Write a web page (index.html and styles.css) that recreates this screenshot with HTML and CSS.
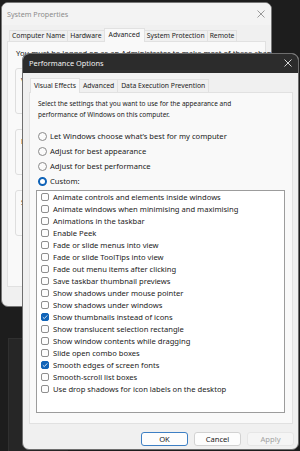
FILE: index.html
```html
<!DOCTYPE html>
<html>
<head>
<meta charset="utf-8">
<title>Performance Options</title>
<link rel="stylesheet" href="styles.css">
</head>
<body>
<div class="backwin"></div>

<div class="win sys">
  <div class="titlebar light">
    <span class="title">System Properties</span>
    <svg class="close" viewBox="0 0 8 8" width="8" height="8"><path d="M0.5 0.5 L7.5 7.5 M7.5 0.5 L0.5 7.5" stroke="#8f8f8f" stroke-width="0.9" fill="none"/></svg>
  </div>
  <div class="tabs stabs">
    <div class="tab">Computer Name</div>
    <div class="tab">Hardware</div>
    <div class="tab sel">Advanced</div>
    <div class="tab">System Protection</div>
    <div class="tab">Remote</div>
  </div>
  <div class="panel syspanel">
    <p class="note">You must be logged on as an Administrator to make most of these changes.</p>
    <fieldset class="group">
      <legend>Performance</legend>
      <p>Visual effects, processor scheduling, memory usage and virtual memory</p>
    </fieldset>
    <fieldset class="group">
      <legend>User Profiles</legend>
      <p>Desktop settings related to your sign-in</p>
    </fieldset>
    <fieldset class="group">
      <legend>Startup and Recovery</legend>
      <p>System startup, system failure and debugging information</p>
    </fieldset>
  </div>
</div>

<div class="win perf">
  <div class="titlebar dark">
    <span class="title">Performance Options</span>
    <svg class="close" viewBox="0 0 8 8" width="8" height="8"><path d="M0.5 0.5 L7.5 7.5 M7.5 0.5 L0.5 7.5" stroke="#e8e8e8" stroke-width="0.9" fill="none"/></svg>
  </div>
  <div class="body">
    <div class="tabs ptabs">
      <div class="tab sel">Visual Effects</div>
      <div class="tab">Advanced</div>
      <div class="tab">Data Execution Prevention</div>
    </div>
    <div class="panel perfpanel">
      <p class="intro">Select the settings that you want to use for the appearance and performance of Windows on this computer.</p>
      <div class="radios">
        <div class="radio"><span class="rb"></span>Let Windows choose what’s best for my computer</div>
        <div class="radio"><span class="rb"></span>Adjust for best appearance</div>
        <div class="radio"><span class="rb"></span>Adjust for best performance</div>
        <div class="radio"><span class="rb on"></span>Custom:</div>
      </div>
      <div class="listbox">
        <div class="item"><span class="cb"></span>Animate controls and elements inside windows</div>
        <div class="item"><span class="cb"></span>Animate windows when minimising and maximising</div>
        <div class="item"><span class="cb"></span>Animations in the taskbar</div>
        <div class="item"><span class="cb"></span>Enable Peek</div>
        <div class="item"><span class="cb"></span>Fade or slide menus into view</div>
        <div class="item"><span class="cb"></span>Fade or slide ToolTips into view</div>
        <div class="item"><span class="cb"></span>Fade out menu items after clicking</div>
        <div class="item"><span class="cb"></span>Save taskbar thumbnail previews</div>
        <div class="item"><span class="cb"></span>Show shadows under mouse pointer</div>
        <div class="item"><span class="cb"></span>Show shadows under windows</div>
        <div class="item"><span class="cb on"><svg viewBox="0 0 8 8" width="8" height="8"><path d="M1.8 4.2 L3.3 5.6 L6.3 2.4" stroke="#fff" stroke-width="0.8" fill="none"/></svg></span>Show thumbnails instead of icons</div>
        <div class="item"><span class="cb"></span>Show translucent selection rectangle</div>
        <div class="item"><span class="cb"></span>Show window contents while dragging</div>
        <div class="item"><span class="cb"></span>Slide open combo boxes</div>
        <div class="item"><span class="cb on"><svg viewBox="0 0 8 8" width="8" height="8"><path d="M1.8 4.2 L3.3 5.6 L6.3 2.4" stroke="#fff" stroke-width="0.8" fill="none"/></svg></span>Smooth edges of screen fonts</div>
        <div class="item"><span class="cb"></span>Smooth-scroll list boxes</div>
        <div class="item"><span class="cb"></span>Use drop shadows for icon labels on the desktop</div>
      </div>
    </div>
    <div class="buttons">
      <button class="btn def">OK</button>
      <button class="btn">Cancel</button>
      <button class="btn dis">Apply</button>
    </div>
  </div>
</div>
</body>
</html>
```

FILE: styles.css
```css
* { box-sizing: border-box; margin: 0; padding: 0; }
html, body { width: 300px; height: 451px; overflow: hidden; }
body {
  position: relative;
  background: #1d1d1d;
  font-family: "Noto Sans", "Segoe UI", sans-serif;
  font-size: 7.6px;
  line-height: 11px;
  color: #1b1b1b;
}

.backwin {
  position: absolute;
  left: 8px; top: 338px;
  width: 60px; height: 113px;
  background: #262626;
  border-left: 1px solid #303030;
  border-top: 1px solid #303030;
}

.win { position: absolute; overflow: hidden; }

.sys {
  left: 1px; top: 2px;
  width: 271px; height: 305px;
  background: #f0f0f0;
  border: 1px solid #777;
  border-radius: 7px;
}

.perf {
  left: 22px; top: 53px;
  width: 277px; height: 397px;
  background: #f0f0f0;
  border: 1px solid #6e6e6e;
  border-radius: 7px;
  display: flex;
  flex-direction: column;
}

.titlebar {
  display: flex;
  align-items: center;
  justify-content: space-between;
}
.titlebar.light { height: 22px; padding: 0 6px 0 5px; background: #f3f3f3; }
.titlebar.light .title { color: #8c8c8c; font-size: 7.2px; }
.titlebar.dark { height: 19px; padding: 0 6px 1px 6px; background: #2c2c2c; }
.titlebar.dark .title { color: #f2f2f2; font-size: 7.4px; }

.tabs {
  display: flex;
  align-items: flex-end;
  position: relative;
  z-index: 1;
}
.tab {
  border: 1px solid #e1e1e1;
  border-bottom: none;
  background: #f0f0f0;
  white-space: nowrap;
}
.tab + .tab { margin-left: -1px; }
.tab.sel {
  background: #f9f9f9;
  margin-bottom: -1px;
  position: relative;
  z-index: 2;
}

.stabs { height: 13px; padding-left: 7px; margin-top: 3px; font-size: 6.8px; }
.stabs .tab { height: 11px; line-height: 10px; padding: 0 2px; }
.stabs .tab.sel { height: 14px; line-height: 12px; padding: 0 4px; }

.panel {
  background: #f9f9f9;
  border: 1px solid #e1e1e1;
}

.syspanel {
  margin: 0 5px 0 5px;
  height: 246px;
  padding: 6px 0 0 7px;
}
.note { margin-left: 1px; white-space: nowrap; }
.group {
  border: 1px solid #dedede;
  border-radius: 3px;
  width: 250px;
  padding: 1px 0 0 5px;
  margin-top: 4px;
  height: 51px;
}
.group + .group { margin-top: 10px; }
.group legend { padding: 0 1px; margin-left: 4px; line-height: 11px; }
.group p { white-space: nowrap; }

.body {
  flex: 1;
  display: flex;
  flex-direction: column;
  padding-top: 2px;
}
.ptabs { height: 16px; padding-left: 7px; margin-top: 1px; font-size: 6.8px; }
.ptabs .tab { height: 13px; line-height: 12px; padding: 0 3px; }
.ptabs .tab.sel { height: 15px; line-height: 13px; }

.perfpanel {
  margin: 0 5px 0 6px;
  height: 332px;
  padding: 5px 6px 0 8px;
}
.intro { width: 226px; line-height: 11px; font-size: 6.5px; }
.radios { margin-top: 9px; }
.radio {
  display: flex;
  align-items: center;
  height: 15px;
  gap: 3px;
}
.rb {
  width: 9px; height: 9px;
  border-radius: 50%;
  border: 1px solid #8a8a8a;
  background: #fbfbfb;
  flex: none;
}
.rb.on {
  border: 2.5px solid #0f63b8;
  background: #fff;
}

.listbox {
  margin: 1px 0 0 -2px;
  width: 249px;
  height: 223px;
  background: #fff;
  border: 1px solid #9c9c9c;
  padding: 0 0 0 4px;
}
.item {
  display: flex;
  align-items: center;
  height: 12px;
  gap: 4px;
  white-space: nowrap;
}
.cb {
  width: 8px; height: 8px;
  border: 1px solid #8e8e8e;
  border-radius: 2px;
  background: #fdfdfd;
  flex: none;
  display: flex;
}
.cb.on { background: #0f63b8; border-color: #0f63b8; }
.cb svg { width: 8px; height: 8px; margin: -1px; }

.buttons {
  display: flex;
  justify-content: flex-end;
  gap: 6px;
  padding: 8px 4px 0 0;
}
.btn {
  width: 47px;
  height: 14px;
  font: inherit;
  line-height: 12px;
  color: #1b1b1b;
  background: #fdfdfd;
  border: 1px solid #d2d2d2;
  border-radius: 3px;
}
.btn.def { border-color: #3d7fc4; }
.btn.dis { background: #f5f5f5; border-color: #e6e6e6; color: #a2a2a2; }
```
